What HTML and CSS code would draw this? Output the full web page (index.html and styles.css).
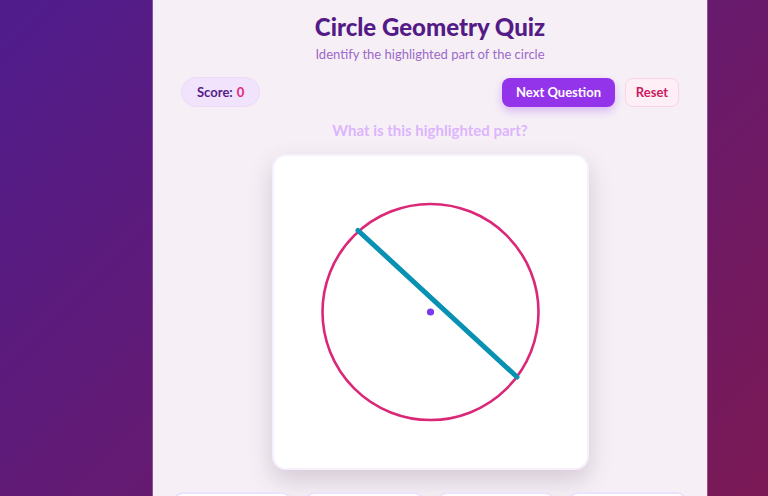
FILE: index.html
```html
<!DOCTYPE html>
<html lang="en">
<head>
<meta charset="utf-8">
<title>Circle Geometry Quiz</title>
<link rel="stylesheet" href="styles.css">
</head>
<body>
<main class="card">
  <header class="head">
    <h1 class="title">Circle Geometry Quiz</h1>
    <p class="subtitle">Identify the highlighted part of the circle</p>
  </header>
  <div class="controls">
    <div class="score">Score: <span class="score-num">0</span></div>
    <div class="actions">
      <button class="btn btn-next">Next Question</button>
      <button class="btn btn-reset">Reset</button>
    </div>
  </div>
  <p class="question">What is this highlighted part?</p>
  <div class="figure">
    <svg class="figure-svg" viewBox="0 0 313 312" width="313" height="312">
      <circle cx="156.5" cy="156" r="108" fill="none" stroke="#db2777" stroke-width="2.6"/>
      <line x1="84" y1="74.5" x2="243" y2="221" stroke="#0891b2" stroke-width="5" stroke-linecap="round"/>
      <circle cx="156.5" cy="156" r="3.6" fill="#7c3aed"/>
    </svg>
  </div>
  <div class="options">
    <button class="option">Radius</button>
    <button class="option">Diameter</button>
    <button class="option">Chord</button>
    <button class="option">Tangent</button>
  </div>
</main>
</body>
</html>
```

FILE: styles.css
```css
* { box-sizing: border-box; }

html, body {
  margin: 0;
  height: 100%;
  overflow: hidden;
}

body {
  background: linear-gradient(135deg, #4f1c8d 0%, #7b1955 100%);
  font-family: "Lato", "Open Sans", sans-serif;
}

.card {
  width: 554px;
  margin: -24px 0 0 153px;
  padding: 34px 20px 20px;
  background: #f6f0f6;
  border-radius: 24px;
  border-top: 3px solid #e0469a;
  box-shadow: 0 0 0 1px rgba(255,255,255,0.25);
  display: flex;
  flex-direction: column;
  align-items: center;
}

.head {
  text-align: center;
}

.title {
  margin: 0;
  font-size: 24px;
  line-height: 28px;
  font-weight: 900;
  color: #541b86;
}

.subtitle {
  margin: 4px 0 0;
  font-size: 13px;
  line-height: 18px;
  color: #9c69c9;
}

.controls {
  width: 100%;
  padding: 0 8px;
  margin-top: 14px;
  display: flex;
  justify-content: space-between;
  align-items: center;
}

.score {
  height: 30px;
  padding: 0 15px;
  border-radius: 15px;
  background: #f2e3fc;
  border: 1px solid #eadafc;
  color: #561d87;
  font-size: 13px;
  font-weight: 700;
  display: flex;
  align-items: center;
}

.score-num {
  color: #e0287a;
  margin-left: 4px;
}

.actions {
  display: flex;
  gap: 10px;
}

.btn {
  height: 29px;
  border-radius: 8px;
  font-family: inherit;
  font-size: 13px;
  font-weight: 700;
  cursor: pointer;
}

.btn-next {
  width: 113px;
  background: #9333ea;
  color: #fff;
  border: none;
  box-shadow: 0 4px 10px rgba(147, 51, 234, 0.3);
}

.btn-reset {
  width: 54px;
  background: #fdeff5;
  color: #cf1a63;
  border: 1px solid #fbd3e6;
}

.question {
  margin: 13px 0 0;
  font-size: 15px;
  line-height: 20px;
  font-weight: 700;
  color: #dcb5fd;
}

.figure {
  margin-top: 14px;
  width: 317px;
  height: 316px;
  background: #fff;
  border: 2px solid #f6effc;
  border-radius: 14px;
  box-shadow: 0 10px 24px rgba(60, 20, 60, 0.18);
  display: flex;
  align-items: center;
  justify-content: center;
}

.figure-svg {
  display: block;
}

.options {
  width: 100%;
  margin-top: 22px;
  display: grid;
  grid-template-columns: repeat(4, 1fr);
  gap: 13px;
}

.option {
  height: 64px;
  background: #fff;
  border: 2px solid #ece2fb;
  border-radius: 10px;
  font-family: inherit;
  font-size: 13px;
  font-weight: 600;
  color: #4c1d7a;
}
```
